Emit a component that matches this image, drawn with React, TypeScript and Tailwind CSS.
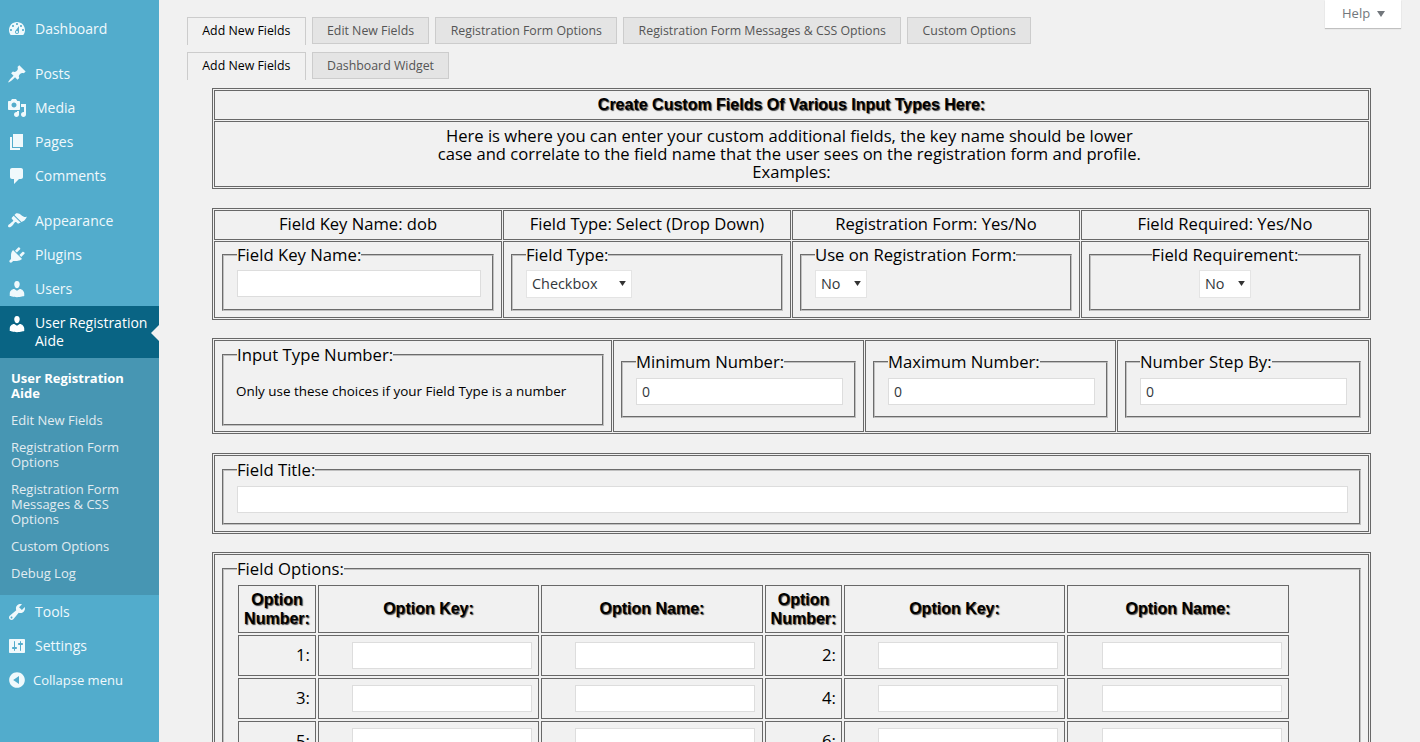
import type { ReactNode } from "react";

const icons: Record<string, string> = {
  dashboard:
    "M3.76 16h12.48c1.1-1.37 1.76-3.11 1.76-5 0-4.42-3.58-8-8-8s-8 3.58-8 8c0 1.89.66 3.63 1.76 5zM10 4c.55 0 1 .45 1 1s-.45 1-1 1-1-.45-1-1 .45-1 1-1zM6 6c.55 0 1 .45 1 1s-.45 1-1 1-1-.45-1-1 .45-1 1-1zm8 0c.55 0 1 .45 1 1s-.45 1-1 1-1-.45-1-1 .45-1 1-1zm-5.37 5.55L12 7v6c0 1.1-.9 2-2 2s-2-.9-2-2c0-.57.24-1.08.63-1.45zM4 10c.55 0 1 .45 1 1s-.45 1-1 1-1-.45-1-1 .45-1 1-1zm12 0c.55 0 1 .45 1 1s-.45 1-1 1-1-.45-1-1 .45-1 1-1zm-5 3c0-.55-.45-1-1-1s-1 .45-1 1 .45 1 1 1 1-.45 1-1z",
  posts:
    "M10.44 3.02l1.82-1.82 6.36 6.35-1.83 1.82c-1.05-.68-2.48-.57-3.41.36l-.75.75c-.92.93-1.04 2.35-.35 3.41l-1.83 1.82-2.41-2.41-2.8 2.79c-.42.42-3.38 2.71-3.8 2.29s1.86-3.39 2.28-3.81l2.79-2.79L4.1 9.36l1.83-1.82c1.05.69 2.48.57 3.4-.36l.75-.75c.93-.92 1.05-2.35.36-3.41z",
  media:
    "M13 11V4c0-.55-.45-1-1-1h-1.67L9 1H5L3.67 3H2c-.55 0-1 .45-1 1v7c0 .55.45 1 1 1h10c.55 0 1-.45 1-1zM7 4.5c1.38 0 2.5 1.12 2.5 2.5S8.38 9.5 7 9.5 4.5 8.38 4.5 7 5.62 4.5 7 4.5zM14 6h5v10.5c0 1.38-1.12 2.5-2.5 2.5S14 17.88 14 16.5s1.12-2.5 2.5-2.5c.17 0 .34.02.5.05V9h-3V6zm-4 8.05V13h2v3.5c0 1.38-1.12 2.5-2.5 2.5S7 17.88 7 16.5 8.12 14 9.5 14c.17 0 .34.02.5.05z",
  pages: "M6 15V2h10v13H6zm-1 1h8v2H3V5h2v11z",
  comments:
    "M5 2h9c1.1 0 2 .9 2 2v7c0 1.1-.9 2-2 2h-2l-5 5v-5H5c-1.1 0-2-.9-2-2V4c0-1.1.9-2 2-2z",
  appearance:
    "M14.48 11.06L7.41 3.99l1.5-1.5c.5-.56 2.3-.47 3.51.32 1.21.8 1.43 1.28 2.91 2.1 1.18.64 2.45 1.26 4.45.85-.56 1.6-1.8 3.4-2.7 3.9l-2.6 1.4zm-.71.71L6.7 4.7 4.93 6.47c-.39.39-.39 1.02 0 1.41l1.06 1.06c.39.39.39 1.03 0 1.42-.6.6-1.43 1.11-2.21 1.69-.35.26-.7.53-1.01.84C1.43 13.23.4 14.85 1.43 15.88c1.03 1.03 2.65 0 4.02-1.35.31-.31.58-.66.84-1.01.58-.78 1.09-1.61 1.69-2.21.39-.39 1.02-.39 1.41 0l1.06 1.06c.39.39 1.02.39 1.41 0z",
  plugins:
    "M13.11 4.36L9.87 7.6 8 5.73l3.24-3.24c.35-.34 1.05-.2 1.56.32.52.51.66 1.21.31 1.55zm-8 1.77l.91-1.12 9.01 9.01-1.19.84c-.71.71-2.63 1.16-3.82 1.16H6.14L4.9 17.26c-.59.59-1.54.59-2.12 0-.59-.58-.59-1.53 0-2.12l1.24-1.24v-3.88c0-1.13.4-3.19 1.09-3.89zm7.26 3.97l3.24-3.24c.34-.35 1.04-.21 1.55.31.52.51.66 1.21.31 1.55l-3.24 3.25z",
  users:
    "M10 9.25c-2.27 0-2.73-3.44-2.73-3.44C7 4.02 7.82 2 9.97 2c2.16 0 2.98 2.02 2.71 3.81 0 0-.41 3.44-2.68 3.44zm0 2.57L12.72 10c2.39 0 4.52 2.33 4.52 4.53v2.49s-3.65 1.13-7.24 1.13c-3.65 0-7.24-1.13-7.24-1.13v-2.49c0-2.25 1.94-4.48 4.47-4.48z",
  tools:
    "M16.68 9.77c-1.34 1.34-3.3 1.67-4.95.99l-5.41 6.52c-.99.99-2.59.99-3.58 0s-.99-2.59 0-3.57l6.52-5.42c-.68-1.65-.35-3.61.99-4.95 1.28-1.28 3.12-1.62 4.72-1.06l-2.89 2.89 2.82 2.82 2.86-2.87c.53 1.58.18 3.39-1.08 4.65zM3.81 16.21c.4.39 1.04.39 1.43 0 .4-.4.4-1.04 0-1.43-.39-.4-1.03-.4-1.43 0-.39.39-.39 1.03 0 1.43z",
  settings:
    "M18 16V4c0-.55-.45-1-1-1H3c-.55 0-1 .45-1 1v12c0 .55.45 1 1 1h14c.55 0 1-.45 1-1zM8 11h1c.55 0 1 .45 1 1s-.45 1-1 1H8v1.5c0 .28-.22.5-.5.5s-.5-.22-.5-.5V13H6c-.55 0-1-.45-1-1s.45-1 1-1h1V5.5c0-.28.22-.5.5-.5s.5.22.5.5V11zm5-2h-1c-.55 0-1-.45-1-1s.45-1 1-1h1V5.5c0-.28.22-.5.5-.5s.5.22.5.5V7h1c.55 0 1 .45 1 1s-.45 1-1 1h-1v5.5c0 .28-.22.5-.5.5s-.5-.22-.5-.5V9z",
  collapse:
    "M10 2.16c4.33 0 7.84 3.51 7.84 7.84s-3.51 7.84-7.84 7.84S2.16 14.33 2.16 10 5.71 2.16 10 2.16zm2 11.72V6.12L6.18 9.97z",
};

function Dashicon({ name }: { name: string }) {
  return (
    <svg viewBox="0 0 20 20" className="w-5 h-5 shrink-0 fill-current" fillRule="evenodd">
      <path d={icons[name]} />
    </svg>
  );
}

function MenuItem({ icon, label, className = "" }: { icon: string; label: string; className?: string }) {
  return (
    <div className={`flex items-center h-[34px] pl-[7px] text-[14px] text-[#f0f9fc] ${className}`}>
      <Dashicon name={icon} />
      <span className="ml-2 -translate-y-px">{label}</span>
    </div>
  );
}

function Sidebar() {
  return (
    <div className="w-[159px] shrink-0 bg-[#52accc] pt-3">
      <MenuItem icon="dashboard" label="Dashboard" className="mb-[11px]" />
      <MenuItem icon="posts" label="Posts" />
      <MenuItem icon="media" label="Media" />
      <MenuItem icon="pages" label="Pages" />
      <MenuItem icon="comments" label="Comments" className="mb-[11px]" />
      <MenuItem icon="appearance" label="Appearance" />
      <MenuItem icon="plugins" label="Plugins" />
      <MenuItem icon="users" label="Users" />
      <div className="relative flex h-[52px] pl-[7px] pt-[8px] bg-[#096484] text-[14px] leading-[18px] text-white">
        <Dashicon name="users" />
        <span className="ml-2">User Registration Aide</span>
        <span className="absolute right-0 top-[19px] border-y-[8px] border-r-[8px] border-y-transparent border-r-[#f1f1f1]" />
      </div>
      <div className="bg-[#4796b3] h-[237px] pt-[13px] pl-[11px] pr-2 text-[13px] leading-[15px] text-[#e2ecf1]">
        <div className="font-bold text-white pb-[12px]">User Registration Aide</div>
        <div className="pb-[12px]">Edit New Fields</div>
        <div className="pb-[12px]">
          Registration Form
          <br />
          Options
        </div>
        <div className="pb-[12px]">
          Registration Form
          <br />
          Messages &amp; CSS
          <br />
          Options
        </div>
        <div className="pb-[12px]">Custom Options</div>
        <div>Debug Log</div>
      </div>
      <MenuItem icon="tools" label="Tools" />
      <MenuItem icon="settings" label="Settings" />
      <div className="flex items-center h-[34px] pl-[7px] text-[13px] text-[#f0f9fc]">
        <Dashicon name="collapse" />
        <span className="ml-[6px] translate-y-px">Collapse menu</span>
      </div>
    </div>
  );
}

function Tab({ label, active }: { label: string; active?: boolean }) {
  return active ? (
    <div className="h-[28px] -mb-px px-[14.3px] border border-b-0 border-[#ccc] bg-[#f1f1f1] text-[12.35px] leading-[26px] text-black">
      {label}
    </div>
  ) : (
    <div className="h-[27px] px-[14.3px] border border-[#ccc] bg-[#e4e4e4] text-[12.35px] leading-[25px] text-[#555]">
      {label}
    </div>
  );
}

function Box({ legend, center, className = "", children }: { legend: string; center?: boolean; className?: string; children: ReactNode }) {
  return (
    <fieldset className={`border-2 border-[#c0c0c0] [border-style:groove] pl-[13px] ${center ? "text-center" : ""} ${className}`}>
      <legend className={`text-[16.7px] leading-[22px] text-black ${center ? "mx-auto" : ""}`}>{legend}</legend>
      {children}
    </fieldset>
  );
}

function TextInput({ value = "", className = "" }: { value?: string; className?: string }) {
  return (
    <input
      readOnly
      value={value}
      className={`block h-[27px] bg-white border border-[#ddd] px-[5px] text-[14px] text-[#32373c] ${className}`}
    />
  );
}

function Dropdown({ value, className = "" }: { value: string; className?: string }) {
  return (
    <div className={`relative inline-block h-[28px] bg-white border border-[#e4e4e4] text-left ${className}`}>
      <select defaultValue={value} className="appearance-none block w-full h-full pl-[5px] text-[14.4px] text-[#32373c] bg-transparent">
        <option>{value}</option>
      </select>
      <svg viewBox="0 0 8 6" className="absolute right-[5px] top-[10px] w-[7px] h-[5px] fill-[#333]">
        <path d="M0 0h8L4 6z" />
      </svg>
    </div>
  );
}

const bordered = "border-separate border-spacing-[1px] border border-[#686868] table-fixed w-[1159px]";
const cell = "border border-[#686868] p-0 align-top";
const inner = "border border-[#686868]";
const headCell = `${cell} align-middle pt-[3px] leading-[20px]`;
const boxCell = `${cell} px-[7px] pt-[2px]`;
const optionHead = `${inner} pb-[2px]`;

function Heading({ children }: { children: ReactNode }) {
  return (
    <span className="font-['Liberation_Sans',Arial,sans-serif] font-bold text-[16px] leading-[18px] text-black [text-shadow:1px_1px_1px_#444]">
      {children}
    </span>
  );
}

function OptionRow({ a, b }: { a: number; b: number }) {
  const num = (n: number) => <td className={`${inner} text-right pr-[5px] pb-[2px] text-[16.7px] text-black`}>{n}:</td>;
  const field = (pad: string) => (
    <td className={`${inner} ${pad} align-middle`}>
      <TextInput className="w-[180px] ml-auto" />
    </td>
  );
  return (
    <tr className="h-[41px]">
      {num(a)}
      {field("pr-[6px]")}
      {field("pr-[7px]")}
      {num(b)}
      {field("pr-[6px]")}
      {field("pr-[6px]")}
    </tr>
  );
}

export default function App() {
  return (
    <div className="relative flex h-[742px] overflow-hidden bg-[#f1f1f1] font-['Open_Sans','Noto_Sans',sans-serif]">
      <Sidebar />
      <div className="flex-1 min-w-0 pl-[28px] pt-[17px]">
        <div className="flex gap-[6px]">
          <Tab label="Add New Fields" active />
          <Tab label="Edit New Fields" />
          <Tab label="Registration Form Options" />
          <Tab label="Registration Form Messages & CSS Options" />
          <Tab label="Custom Options" />
        </div>
        <div className="flex gap-[6px] mt-[8px]">
          <Tab label="Add New Fields" active />
          <Tab label="Dashboard Widget" />
        </div>

        <div className="ml-[25px] mt-[9px] flex flex-col gap-[19px] text-black text-[16.6px]">
          <table className={bordered}>
            <tbody>
              <tr className="h-[30px]">
                <td className={`${cell} align-middle text-center pt-[1px]`}>
                  <Heading>Create Custom Fields Of Various Input Types Here:</Heading>
                </td>
              </tr>
              <tr className="h-[66px]">
                <td className={`${cell} text-center leading-[18px] pt-[5px]`}>
                  Here is where you can enter your custom additional fields, the key name should be lower&nbsp;
                  <br />
                  case and correlate to the field name that the user sees on the registration form and profile.&nbsp;
                  <br />
                  Examples:
                </td>
              </tr>
            </tbody>
          </table>

          <table className={bordered}>
            <tbody>
              <tr className="h-[30px] text-center">
                <td className={headCell}>Field Key Name: dob</td>
                <td className={headCell}>Field Type: Select (Drop Down)</td>
                <td className={headCell}>Registration Form: Yes/No</td>
                <td className={headCell}>Field Required: Yes/No</td>
              </tr>
              <tr className="h-[77px]">
                <td className={boxCell}>
                  <Box legend="Field Key Name:" className="h-[67px] pt-[4px] pr-[11px]">
                    <TextInput className="w-[244px]" />
                  </Box>
                </td>
                <td className={boxCell}>
                  <Box legend="Field Type:" className="h-[67px] pt-[4px] pr-[11px]">
                    <Dropdown value="Checkbox" className="w-[106px]" />
                  </Box>
                </td>
                <td className={boxCell}>
                  <Box legend="Use on Registration Form:" className="h-[67px] pt-[4px] pr-[11px]">
                    <Dropdown value="No" className="w-[52px]" />
                  </Box>
                </td>
                <td className={boxCell}>
                  <Box legend="Field Requirement:" center className="h-[67px] pt-[4px] pr-[13px]">
                    <Dropdown value="No" className="w-[52px]" />
                  </Box>
                </td>
              </tr>
            </tbody>
          </table>

          <table className={`${bordered} -mt-px`}>
            <colgroup>
              <col className="w-[398px]" />
              <col className="w-[251px]" />
              <col className="w-[251px]" />
              <col />
            </colgroup>
            <tbody>
              <tr className="h-[92px]">
                <td className={`${cell} px-[7px] pt-[3px]`}>
                  <Box legend="Input Type Number:" className="h-[82px] pt-[3px] pr-[13px]">
                    <p className="text-[13.45px] leading-[18px] mt-[13px] -ml-[1px]">
                      Only use these choices if your Field Type is a number
                    </p>
                  </Box>
                </td>
                <td className={`${cell} pl-[7px] pr-[7px] pt-[10px]`}>
                  <Box legend="Minimum Number:" className="w-[235px] h-[67px] pt-[5px] pr-[11px]">
                    <TextInput value="0" className="w-[207px]" />
                  </Box>
                </td>
                <td className={`${cell} pl-[7px] pr-[7px] pt-[10px]`}>
                  <Box legend="Maximum Number:" className="w-[235px] h-[67px] pt-[5px] pr-[11px]">
                    <TextInput value="0" className="w-[207px]" />
                  </Box>
                </td>
                <td className={`${cell} pl-[7px] pr-[7px] pt-[10px]`}>
                  <Box legend="Number Step By:" className="w-[236px] h-[67px] pt-[5px] pr-[11px]">
                    <TextInput value="0" className="w-[207px]" />
                  </Box>
                </td>
              </tr>
            </tbody>
          </table>

          <table className={bordered}>
            <tbody>
              <tr className="h-[77px]">
                <td className={`${cell} px-[7px] pt-[3px]`}>
                  <Box legend="Field Title:" className="h-[66px] pt-[5px] pr-[11px]">
                    <TextInput className="w-[1111px]" />
                  </Box>
                </td>
              </tr>
            </tbody>
          </table>

          <table className={`${bordered} -mt-px`}>
            <tbody>
              <tr>
                <td className={`${cell} px-[7px] pt-[3px]`}>
                  <Box legend="Field Options:" className="pt-[3px] pb-4 pr-[13px]">
                    <table className="border-separate border-spacing-[2px] table-fixed w-[1055px] -ml-[1px]">
                      <colgroup>
                        <col className="w-[78px]" />
                        <col className="w-[221px]" />
                        <col className="w-[222px]" />
                        <col className="w-[77px]" />
                        <col className="w-[221px]" />
                        <col className="w-[222px]" />
                      </colgroup>
                      <tbody>
                        <tr className="h-[48px] text-center">
                          <td className={`${inner} leading-[18px]`}><Heading>Option Number:</Heading></td>
                          <td className={optionHead}><Heading>Option Key:</Heading></td>
                          <td className={optionHead}><Heading>Option Name:</Heading></td>
                          <td className={`${inner} leading-[18px]`}><Heading>Option Number:</Heading></td>
                          <td className={optionHead}><Heading>Option Key:</Heading></td>
                          <td className={optionHead}><Heading>Option Name:</Heading></td>
                        </tr>
                        <OptionRow a={1} b={2} />
                        <OptionRow a={3} b={4} />
                        <OptionRow a={5} b={6} />
                      </tbody>
                    </table>
                  </Box>
                </td>
              </tr>
            </tbody>
          </table>
        </div>
      </div>

      <div className="absolute right-[19px] top-0 flex items-center h-[28px] w-[76px] pl-[17px] bg-white shadow-[0_1px_1px_rgba(0,0,0,0.2)] text-[13px] text-[#72777c]">
        Help
        <svg viewBox="0 0 8 6" className="ml-[7px] w-2 h-[6px] fill-[#72777c]">
          <path d="M0 0h8L4 6z" />
        </svg>
      </div>
    </div>
  );
}
